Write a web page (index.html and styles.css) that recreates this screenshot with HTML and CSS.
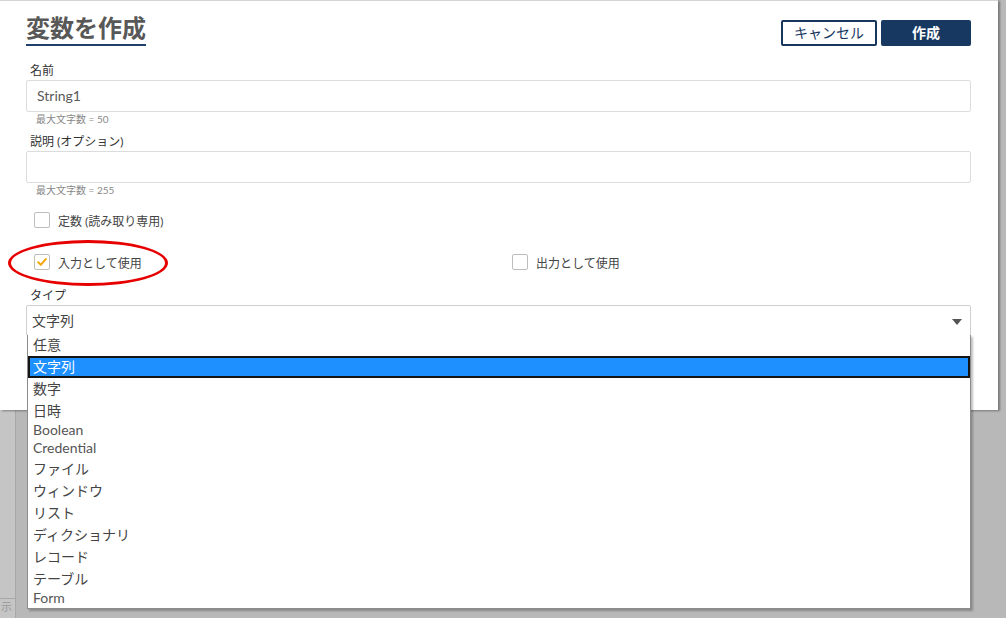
FILE: index.html
```html
<!DOCTYPE html>
<html lang="ja">
<head>
    <meta charset="UTF-8">
    <meta name="viewport" content="width=device-width, initial-scale=1.0">
    <title>変数を作成</title>
    <link rel="stylesheet" href="styles.css">
</head>
<body>
    <div class="dialog">
        <div class="dialog-header">
            <h1 class="dialog-title">変数を作成</h1>
            <div class="actions">
                <button type="button" class="btn btn-outline">キャンセル</button>
                <button type="button" class="btn btn-primary">作成</button>
            </div>
        </div>

        <div class="field field-first">
            <label class="field-label">名前</label>
            <div class="text-input">String1</div>
            <div class="hint">最大文字数 = 50</div>
        </div>

        <div class="field">
            <label class="field-label">説明 (オプション)</label>
            <div class="text-input"></div>
            <div class="hint">最大文字数 = 255</div>
        </div>

        <div class="check-row check-row-single">
            <label class="check"><span class="box"></span>定数 (読み取り専用)</label>
        </div>

        <div class="check-row check-row-pair">
            <label class="check">
                <span class="box">
                    <svg width="16" height="16" viewBox="0 0 16 16"><path d="M3.6 8.2 L6.6 11.2 L12.4 4.6" fill="none" stroke="#f5a300" stroke-width="2.2" stroke-linecap="round" stroke-linejoin="round"/></svg>
                </span>入力として使用
            </label>
            <label class="check"><span class="box"></span>出力として使用</label>
            <span class="annotation"></span>
        </div>

        <div class="field field-type">
            <label class="field-label">タイプ</label>
            <div class="select">
                <span>文字列</span>
                <span class="arrow"></span>
                <ul class="options">
                    <li class="opt first">任意</li>
                    <li class="opt selected">文字列</li>
                    <li class="opt">数字</li>
                    <li class="opt">日時</li>
                    <li class="opt latin">Boolean</li>
                    <li class="opt latin">Credential</li>
                    <li class="opt">ファイル</li>
                    <li class="opt">ウィンドウ</li>
                    <li class="opt">リスト</li>
                    <li class="opt">ディクショナリ</li>
                    <li class="opt">レコード</li>
                    <li class="opt">テーブル</li>
                    <li class="opt latin">Form</li>
                </ul>
            </div>
        </div>
    </div>

    <div class="backdrop">
        <div class="side-panel">
            <div class="side-top"></div>
            <span class="side-text">示</span>
        </div>
    </div>
</body>
</html>
```

FILE: styles.css
```css
html, body {
    height: 100%;
}

body {
    font-family: Lato, "Noto Sans CJK JP", sans-serif;
    background-color: #b8b8b8;
    margin: 0;
    padding: 0;
    overflow: hidden;
    color: #333;
}

.dialog {
    position: relative;
    z-index: 2;
    width: 998px;
    height: 410px;
    box-sizing: border-box;
    background-color: #fff;
    border-top: 1px solid #d4d4d4;
    padding: 11px 27px 0 26px;
    box-shadow: 2px 1px 2px rgba(0, 0, 0, 0.35);
}

.dialog-header {
    display: flex;
    justify-content: space-between;
    align-items: flex-start;
}

.dialog-title {
    margin: 0;
    font-size: 24px;
    line-height: 32px;
    font-weight: bold;
    color: #585858;
    border-bottom: 2px solid #1f3f6c;
}

.actions {
    display: flex;
    gap: 4px;
    margin-top: 8px;
}

.btn {
    font-family: Lato, "Noto Sans CJK JP", sans-serif;
    font-size: 14px;
    height: 26px;
    padding: 0;
    border-radius: 2px;
    cursor: pointer;
    line-height: 22px;
}

.btn-outline {
    width: 96px;
    background-color: #fff;
    color: #17375f;
    border: 2px solid #17375f;
}

.btn-primary {
    width: 90px;
    background-color: #163861;
    color: #fff;
    border: 2px solid #163861;
    font-weight: bold;
}

.field {
    margin-top: 9px;
}

.field-first {
    margin-top: 18px;
}

.field-label {
    display: block;
    font-size: 12px;
    line-height: 14px;
    margin: 0 0 2px 4px;
    color: #333;
}

.text-input {
    height: 32px;
    box-sizing: border-box;
    border: 1px solid #dcdcdc;
    border-radius: 2px;
    padding: 0 10px;
    font-size: 14px;
    line-height: 30px;
    color: #5a5a5a;
}

.hint {
    font-size: 10px;
    line-height: 14px;
    color: #888;
    padding-left: 10px;
}

.check-row {
    position: relative;
    padding-left: 8px;
    height: 20px;
}

.check-row-single {
    margin-top: 13px;
}

.check-row-pair {
    margin-top: 22px;
    display: grid;
    grid-template-columns: 478px 1fr;
}

.check {
    display: flex;
    align-items: center;
    gap: 8px;
    height: 20px;
    font-size: 12px;
    color: #444;
}

.box {
    width: 16px;
    height: 16px;
    box-sizing: border-box;
    border: 1px solid #bdbdbd;
    border-radius: 2px;
    display: flex;
    align-items: center;
    justify-content: center;
    background-color: #fff;
}

.box svg {
    display: block;
}

.annotation {
    position: absolute;
    left: -18px;
    top: -12px;
    width: 160px;
    height: 46px;
    box-sizing: border-box;
    border: 3.5px solid #e60000;
    border-radius: 50%;
    pointer-events: none;
}

.field-type {
    margin-top: 17px;
}

.select {
    position: relative;
    height: 31px;
    box-sizing: border-box;
    border: 1px solid #cfcfcf;
    border-radius: 2px;
    padding: 0 5px;
    font-size: 14px;
    line-height: 29px;
    color: #444;
}

.arrow {
    position: absolute;
    right: 8px;
    top: 13px;
    width: 0;
    height: 0;
    border-left: 5px solid transparent;
    border-right: 5px solid transparent;
    border-top: 6px solid #555;
}

.options {
    position: absolute;
    top: 100%;
    left: 0;
    right: -1px;
    margin: 0;
    padding: 0;
    list-style: none;
    background-color: #fff;
    border: 1px solid #8c8c8c;
    border-top: none;
    box-shadow: 2px 2px 2px rgba(0, 0, 0, 0.25);
}

.opt {
    height: 22px;
    box-sizing: border-box;
    line-height: 21px;
    padding-left: 5px;
    font-size: 14px;
    color: #444;
}

.opt.first {
    height: 21px;
    line-height: 20px;
}

.opt.latin {
    height: 18px;
    line-height: 16px;
    color: #555;
}

.opt.selected {
    background-color: #1e90ff;
    color: #fff;
    border: 2px solid #141414;
    padding-left: 3px;
    line-height: 17px;
}

.backdrop {
    height: 208px;
}

.side-panel {
    width: 15px;
    height: 100%;
    background-color: #c5c5c5;
    border-right: 1px solid #a8a8a8;
    overflow: hidden;
}

.side-top {
    height: 188px;
    border-bottom: 1px solid #a8a8a8;
}

.side-text {
    display: block;
    margin: 1px 0 0 1px;
    font-size: 11px;
    line-height: 14px;
    color: #999;
}
```
